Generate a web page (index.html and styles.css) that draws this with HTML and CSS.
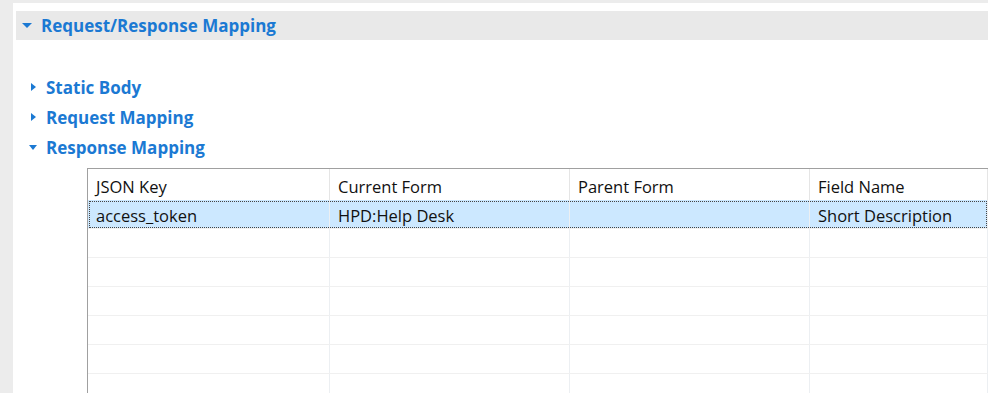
FILE: index.html
```html
<!DOCTYPE html>
<html lang="en">
<head>
    <meta charset="UTF-8">
    <meta name="viewport" content="width=device-width, initial-scale=1.0">
    <title>Request/Response Mapping</title>
    <link rel="stylesheet" href="styles.css">
</head>
<body>

    <div class="frame">
        <div class="section">
            <!-- Section title -->
            <div class="section-head">
                <span class="twisty open big"></span>
                <span class="section-title">Request/Response Mapping</span>
            </div>

            <div class="section-body">
                <div class="sub-item">
                    <span class="twisty closed"></span>
                    <span class="sub-title">Static Body</span>
                </div>
                <div class="sub-item">
                    <span class="twisty closed"></span>
                    <span class="sub-title">Request Mapping</span>
                </div>
                <div class="sub-item">
                    <span class="twisty open"></span>
                    <span class="sub-title">Response Mapping</span>
                </div>

                <!-- Mapping table -->
                <div class="grid">
                    <div class="row head">
                        <div class="cell c1">JSON Key</div>
                        <div class="cell c2">Current Form</div>
                        <div class="cell c3">Parent Form</div>
                        <div class="cell c4">Field Name</div>
                    </div>
                    <div class="row selected">
                        <div class="cell c1">access_token</div>
                        <div class="cell c2">HPD:Help Desk</div>
                        <div class="cell c3"></div>
                        <div class="cell c4">Short Description</div>
                    </div>
                    <div class="row"><div class="cell c1"></div><div class="cell c2"></div><div class="cell c3"></div><div class="cell c4"></div></div>
                    <div class="row"><div class="cell c1"></div><div class="cell c2"></div><div class="cell c3"></div><div class="cell c4"></div></div>
                    <div class="row"><div class="cell c1"></div><div class="cell c2"></div><div class="cell c3"></div><div class="cell c4"></div></div>
                    <div class="row"><div class="cell c1"></div><div class="cell c2"></div><div class="cell c3"></div><div class="cell c4"></div></div>
                    <div class="row"><div class="cell c1"></div><div class="cell c2"></div><div class="cell c3"></div><div class="cell c4"></div></div>
                    <div class="row"><div class="cell c1"></div><div class="cell c2"></div><div class="cell c3"></div><div class="cell c4"></div></div>
                </div>
            </div>
        </div>
    </div>

</body>
</html>
```

FILE: styles.css
```css
html, body {
    margin: 0;
    padding: 0;
    background-color: #fff;
    overflow: hidden;
}

body {
    font-family: "Open Sans", "Noto Sans", sans-serif;
    height: 393px;
}

.frame {
    height: 100%;
    border-left: 13px solid #ececec;
    border-top: 3px solid #ececec;
    box-sizing: border-box;
    overflow: hidden;
}

.section {
    margin-left: 3px;
    padding-top: 8px;
}

.section-head {
    display: flex;
    align-items: center;
    height: 29px;
    background-color: #e9e9e9;
    padding-left: 6px;
}

.section-title, .sub-title {
    color: #1b79d3;
    font-weight: bold;
    font-size: 17px;
}

.section-title {
    margin-left: 9px;
}

.section-body {
    padding-top: 32px;
}

.sub-item {
    display: flex;
    align-items: center;
    height: 30px;
    padding-left: 13px;
}

.sub-title {
    margin-left: 9px;
}

/* small blue expand arrows */
.twisty {
    width: 0;
    height: 0;
    display: inline-block;
}

.twisty.closed {
    margin-left: 2px;
    margin-right: 1px;
    border-top: 4px solid transparent;
    border-bottom: 4px solid transparent;
    border-left: 5px solid #1b79d3;
}

.twisty.open {
    border-left: 4px solid transparent;
    border-right: 4px solid transparent;
    border-top: 5px solid #1b79d3;
}

.twisty.open.big {
    border-left-width: 5px;
    border-right-width: 5px;
    border-top-width: 5px;
}

.grid {
    margin-top: 6px;
    margin-left: 71px;
    border-left: 1px solid #a0a0a0;
    border-top: 1px solid #a0a0a0;
}

.row {
    display: flex;
    height: 29px;
    border-bottom: 1px solid #f0f0f0;
    box-sizing: border-box;
}

.row.head {
    height: 31px;
    border-bottom: none;
}

.row.selected {
    background-color: #cce8ff;
    outline: 1px dotted #444;
    outline-offset: -2px;
}

.row.selected .cell {
    padding-top: 3px;
}

.cell {
    box-sizing: border-box;
    border-right: 1px solid #eceff2;
    padding-left: 8px;
    font-size: 16.5px;
    color: #111;
    display: flex;
    align-items: center;
    white-space: nowrap;
    flex-shrink: 0;
}

.row.head .cell {
    border-right-color: #e5e5e5;
    padding-top: 3px;
}

.c1 { width: 242px; }
.c2 { width: 240px; }
.c3 { width: 240px; }
.c4 { flex: 1; }
```
